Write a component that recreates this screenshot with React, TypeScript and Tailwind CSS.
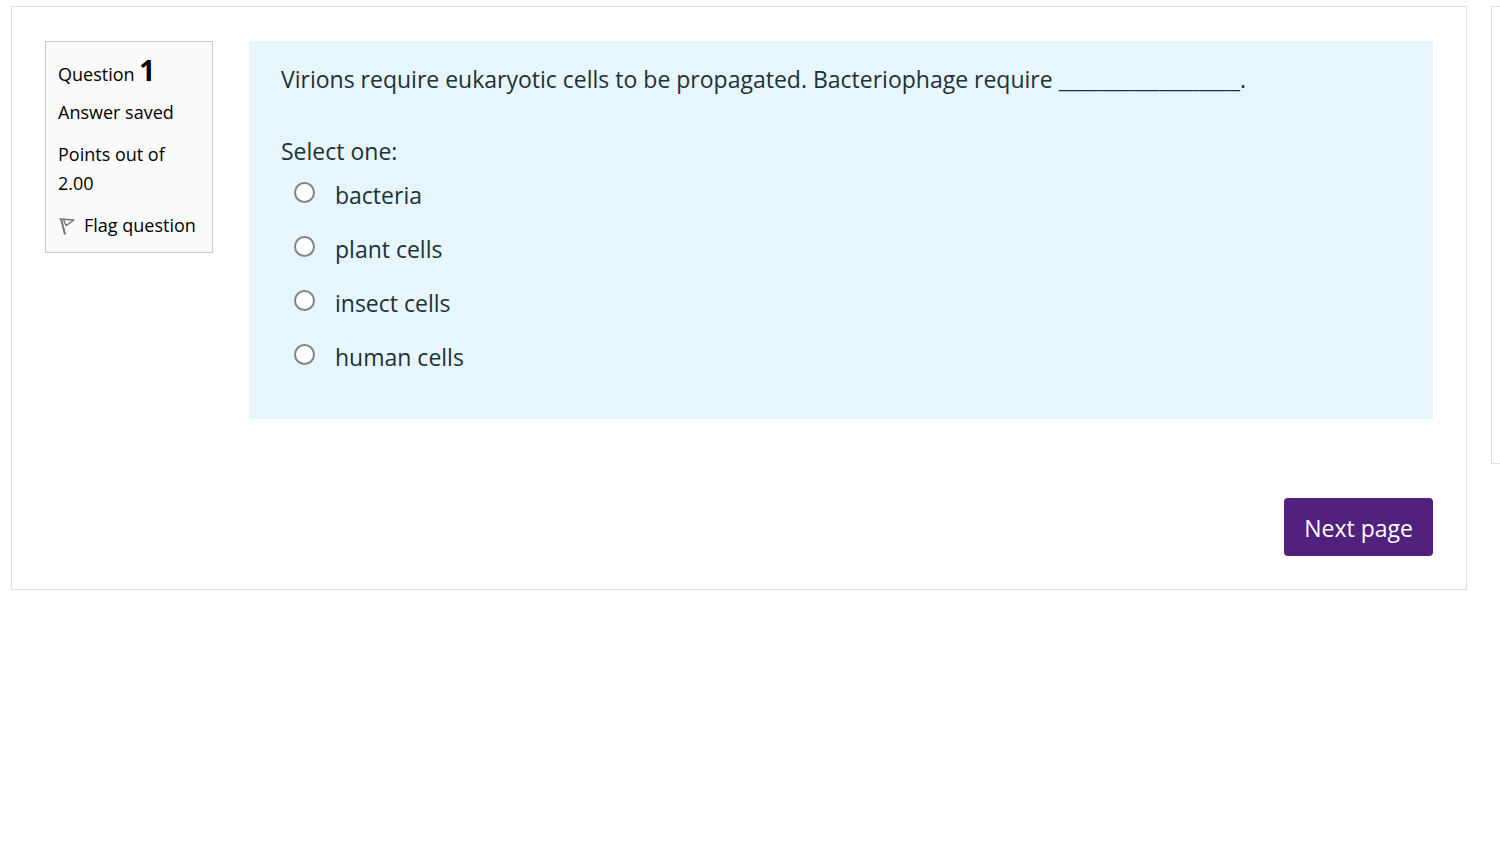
import React from 'react';

const answers = ['bacteria', 'plant cells', 'insect cells', 'human cells'];

const FlagIcon = () => (
  <svg aria-hidden="true" viewBox="0 0 18 20" fill="none" className="h-5 w-[18px] shrink-0">
    <path d="M3 2.5 7 18.5" stroke="#777" strokeWidth="2" />
    <path d="M5.4 3.2 16 4 8 9.6Z" stroke="#777" strokeWidth="1.4" strokeLinejoin="round" />
    <path d="M1.2 2.8 6.5 3.2" stroke="#888" strokeWidth="1.2" />
  </svg>
);

const QuestionInfo = () => (
  <section className="w-[168px] shrink-0 border border-[#cacaca] bg-[#fafafa] px-3 pt-[10px] pb-3 text-[18px] leading-[29px] text-black">
    <h3 className="leading-9">
      Question <span className="text-[28px] leading-9 font-bold">1</span>
    </h3>
    <div className="mt-[6px]">Answer saved</div>
    <div className="mt-[13px]">Points out of 2.00</div>
    <button type="button" className="mt-[13px] flex items-center gap-2 whitespace-nowrap">
      <FlagIcon />
      Flag question
    </button>
  </section>
);

const App: React.FC = () => {
  const [answer, setAnswer] = React.useState('');

  return (
    <div className="flex items-start gap-6 overflow-hidden bg-white pt-[6px] pl-[11px] font-['Open_Sans',sans-serif]">
      <main className="min-w-0 flex-1 border border-[#dfdfdf] px-[33px] pt-[34px] pb-[33px]">
        <div className="flex items-start gap-9">
          <QuestionInfo />
          <form className="min-w-0 flex-1 bg-[#e7f5fc] px-8 pt-5 pb-11 text-[23px] leading-9 text-[#1d3139]">
            <p>Virions require eukaryotic cells to be propagated. Bacteriophage require __________________.</p>
            <fieldset className="mt-9">
              <legend>Select one:</legend>
              <div className="mt-2 flex flex-col gap-[18px]">
                {answers.map((item) => (
                  <label key={item} className="flex items-start pl-[13px]">
                    <input
                      type="radio"
                      name="answer"
                      value={item}
                      checked={answer === item}
                      onChange={() => setAnswer(item)}
                      className="mt-[5px] mr-5 size-[21px] shrink-0 appearance-none rounded-full border-2 border-[#808488] bg-white checked:border-6 checked:border-[#0075ff]"
                    />
                    {item}
                  </label>
                ))}
              </div>
            </fieldset>
          </form>
        </div>
        <div className="mt-[79px] flex justify-end">
          <button type="button" className="rounded bg-[#51217d] px-5 pt-3 pb-[10px] text-[23px] leading-9 text-white">
            Next page
          </button>
        </div>
      </main>
      <aside className="h-[458px] w-[9px] shrink-0 border border-r-0 border-[#dfdfdf]" />
    </div>
  );
};

export default App;
